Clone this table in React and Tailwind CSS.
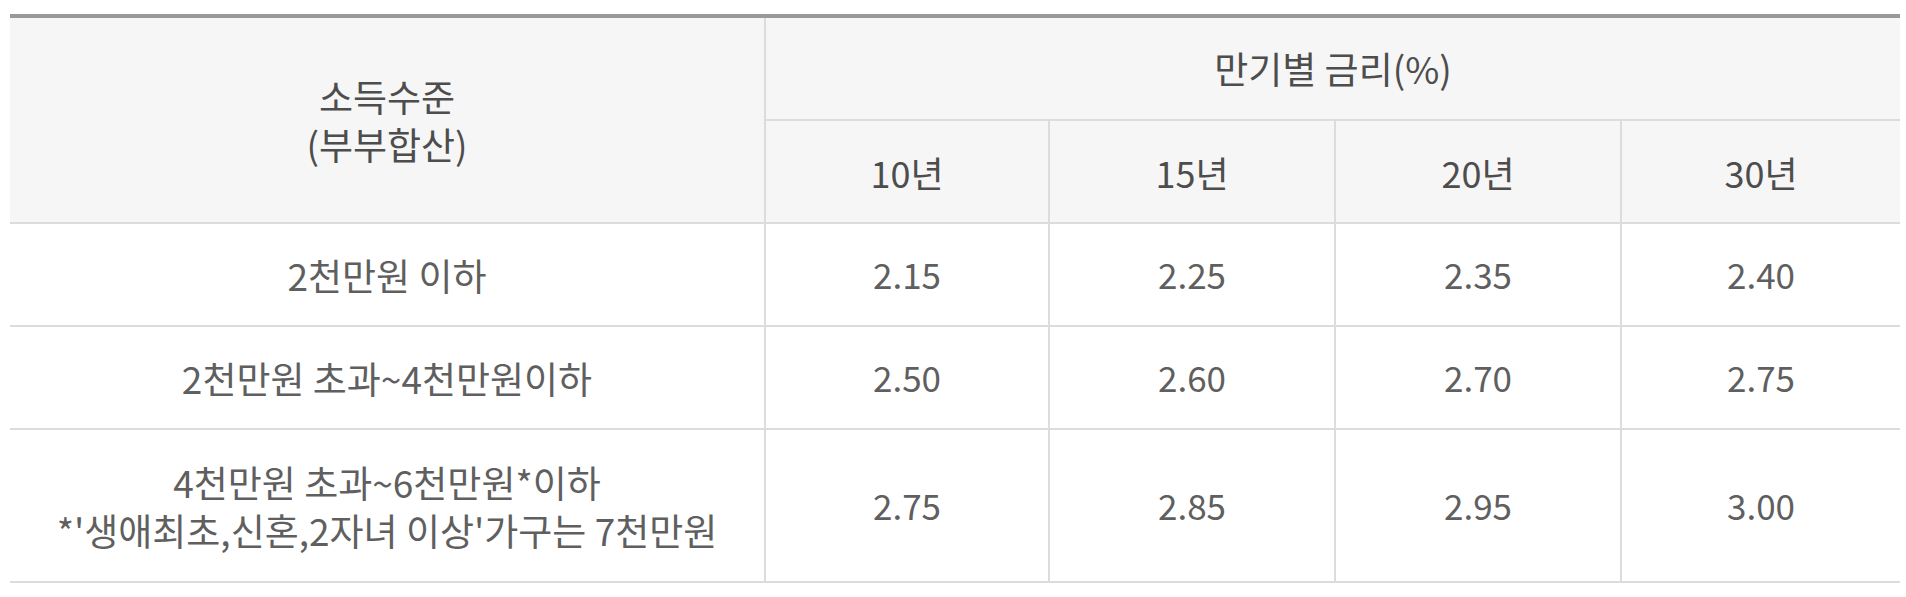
import React from 'react';

const terms = ['10년', '15년', '20년', '30년'];

const rows = [
  { label: ['2천만원 이하'], rates: ['2.15', '2.25', '2.35', '2.40'], h: 'h-[103px]' },
  { label: ['2천만원 초과~4천만원이하'], rates: ['2.50', '2.60', '2.70', '2.75'], h: 'h-[103px]' },
  {
    label: ['4천만원 초과~6천만원*이하', "*'생애최초,신혼,2자녀 이상'가구는 7천만원"],
    rates: ['2.75', '2.85', '2.95', '3.00'],
    h: 'h-[153px]',
  },
];

const cell = 'flex items-center justify-center text-center border-b-2 border-[#dcdcdc]';

export default function App() {
  return (
    <div className="min-h-screen bg-white pt-[14px] pl-[10px] font-['Noto_Sans_CJK_KR','Noto_Sans',sans-serif]">
      <div className="w-[1890px] border-t-4 border-[#999999]">
        {/* header */}
        <div className="grid grid-cols-[756px_1134px] bg-[#f6f6f6] text-[#4d4d4d] text-[37px]">
          <div className={`${cell} border-r-2 h-[206px] flex-col leading-[48px]`}>
            <span>소득수준</span>
            <span>(부부합산)</span>
          </div>
          <div className="flex flex-col">
            <div className={`${cell} h-[103px]`}>만기별 금리(%)</div>
            <div className="grid grid-cols-[284px_286px_286px_278px] text-[36px]">
              {terms.map((t, i) => (
                <div key={t} className={`${cell} h-[103px] ${i < 3 ? 'border-r-2' : ''}`}>{t}</div>
              ))}
            </div>
          </div>
        </div>

        {/* body */}
        {rows.map((r, ri) => (
          <div key={ri} className="grid grid-cols-[756px_284px_286px_286px_278px] text-[#5f5f5f]">
            <div className={`${cell} ${r.h} border-r-2 flex-col text-[37px] leading-[48px]`}>
              {r.label.map((l) => <span key={l}>{l}</span>)}
            </div>
            {r.rates.map((v, i) => (
              <div key={i} className={`${cell} ${r.h} text-[35px] ${i < 3 ? 'border-r-2' : ''}`}>{v}</div>
            ))}
          </div>
        ))}
      </div>
    </div>
  );
}
